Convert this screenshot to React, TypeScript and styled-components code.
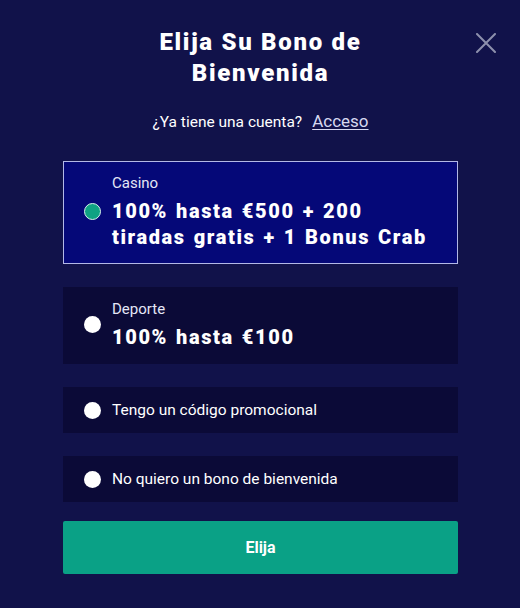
import React, { useState } from "react";
import styled, { createGlobalStyle } from "styled-components";

const GlobalStyle = createGlobalStyle`
  html, body {
    margin: 0;
    padding: 0;
    background: #11124a;
  }
  body {
    font-family: Roboto, "Liberation Sans", sans-serif;
    color: #ffffff;
  }
`;

const Modal = styled.div`
  position: relative;
  width: 520px;
  height: 608px;
  box-sizing: border-box;
  padding: 27px 62px 0 63px;
  background: #11124a;
`;

const CloseButton = styled.button`
  position: absolute;
  top: 31px;
  right: 22px;
  width: 24px;
  height: 24px;
  padding: 0;
  border: none;
  background: transparent;
  cursor: pointer;
  display: flex;
  align-items: center;
  justify-content: center;
`;

const Title = styled.h2`
  margin: 0 auto;
  width: 260px;
  font-size: 24px;
  line-height: 31px;
  font-weight: 900;
  letter-spacing: 1.7px;
  text-align: center;
`;

const LoginRow = styled.p`
  margin: 22px 0 0;
  display: flex;
  justify-content: center;
  align-items: baseline;
  gap: 10px;
  font-size: 15.5px;
  line-height: 20px;
  color: #ffffff;
`;

const LoginLink = styled.a`
  color: #d6d8f0;
  font-size: 17px;
  text-decoration: underline;
  text-underline-offset: 2px;
  cursor: pointer;
`;

const OptionList = styled.div`
  margin-top: 29px;
  display: flex;
  flex-direction: column;
  gap: 23px;
`;

const Option = styled.label<{ $active: boolean; $compact?: boolean }>`
  display: flex;
  align-items: center;
  gap: 11px;
  box-sizing: border-box;
  min-height: ${(p) => (p.$compact ? "46px" : "76px")};
  padding: ${(p) => (p.$compact ? "0 16px 0 20px" : "11px 16px 13px 20px")};
  background: ${(p) => (p.$active ? "#050878" : "#0b0a37")};
  border: 1px solid ${(p) => (p.$active ? "#b3b8e6" : "transparent")};
  cursor: pointer;
`;

const Radio = styled.span<{ $checked: boolean }>`
  flex: none;
  width: 17px;
  height: 17px;
  border-radius: 50%;
  box-sizing: border-box;
  background: ${(p) => (p.$checked ? "#0fa283" : "#ffffff")};
  border: ${(p) => (p.$checked ? "1.5px solid #d8f2ec" : "none")};
`;

const OptionBody = styled.div`
  display: flex;
  flex-direction: column;
  gap: 5px;
  max-width: 320px;
`;

const Category = styled.span`
  font-size: 15px;
  line-height: 20px;
  color: #e4e6f6;
`;

const Offer = styled.span`
  font-size: 20px;
  line-height: 26px;
  font-weight: 900;
  letter-spacing: 1.6px;
  word-spacing: 1.5px;
  color: #ffffff;
`;

const Plain = styled.span`
  font-size: 15.5px;
  line-height: 20px;
  color: #ffffff;
`;

const Submit = styled.button`
  margin-top: 19px;
  width: 100%;
  height: 53px;
  border: none;
  border-radius: 2px;
  background: #0aa186;
  color: #ffffff;
  font-family: Roboto, "Liberation Sans", sans-serif;
  font-size: 16px;
  font-weight: 700;
  cursor: pointer;
`;

type Bonus = {
  id: string;
  category?: string;
  text: string;
};

const bonuses: Bonus[] = [
  { id: "casino", category: "Casino", text: "100% hasta €500 + 200 tiradas gratis + 1 Bonus Crab" },
  { id: "sport", category: "Deporte", text: "100% hasta €100" },
  { id: "promo", text: "Tengo un código promocional" },
  { id: "none", text: "No quiero un bono de bienvenida" },
];

const App: React.FC = () => {
  const [selected, setSelected] = useState("casino");

  return (
    <>
      <GlobalStyle />
      <Modal>
        <CloseButton aria-label="Cerrar">
          <svg width="20" height="20" viewBox="0 0 20 20">
            <path d="M1 1 L19 19 M19 1 L1 19" stroke="#8d90ad" strokeWidth="2" strokeLinecap="round" />
          </svg>
        </CloseButton>
        <Title>Elija Su Bono de Bienvenida</Title>
        <LoginRow>
          ¿Ya tiene una cuenta?
          <LoginLink>Acceso</LoginLink>
        </LoginRow>
        <OptionList>
          {bonuses.map((b) => (
            <Option
              key={b.id}
              $active={selected === b.id && !!b.category}
              $compact={!b.category}
              onClick={() => setSelected(b.id)}
            >
              <Radio $checked={selected === b.id} />
              {b.category ? (
                <OptionBody>
                  <Category>{b.category}</Category>
                  <Offer>{b.text}</Offer>
                </OptionBody>
              ) : (
                <Plain>{b.text}</Plain>
              )}
            </Option>
          ))}
        </OptionList>
        <Submit>Elija</Submit>
      </Modal>
    </>
  );
};

export default App;
